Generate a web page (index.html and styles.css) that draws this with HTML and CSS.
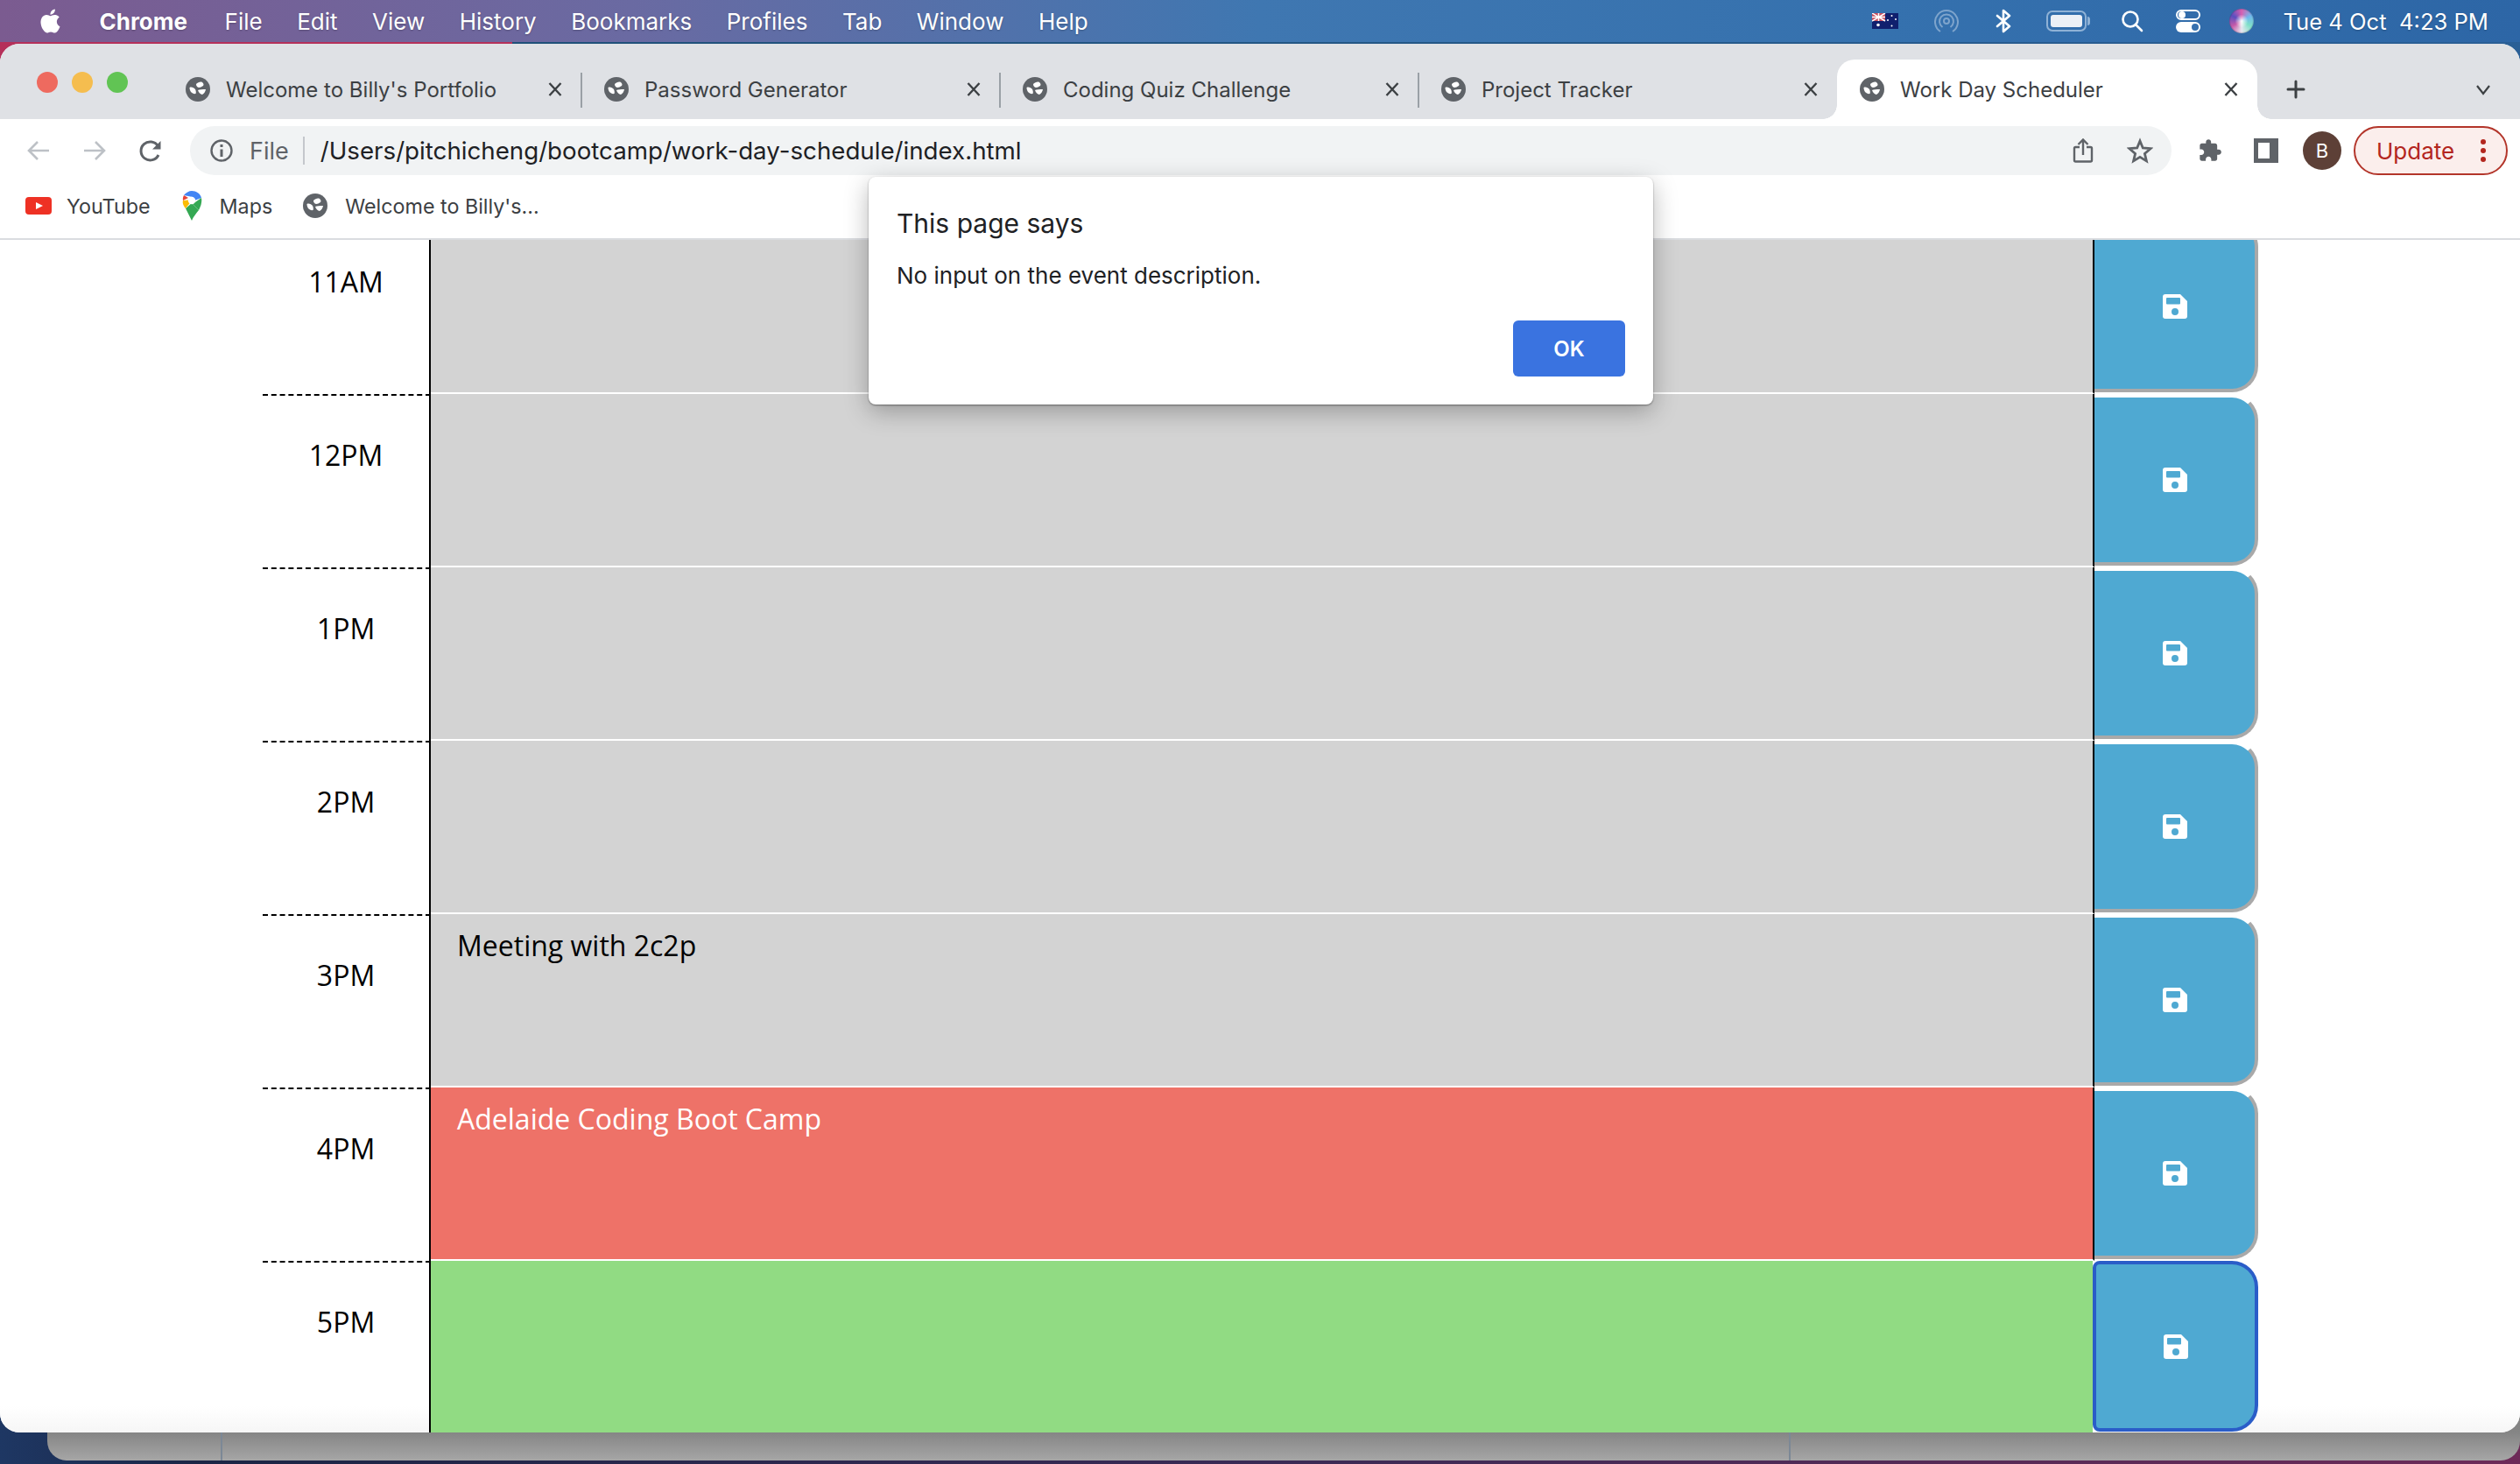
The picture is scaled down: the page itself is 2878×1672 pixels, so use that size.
FILE: index.html
```html
<!DOCTYPE html>
<html lang="en">
<head>
  <meta charset="UTF-8">
  <title>Work Day Scheduler</title>
  <link rel="stylesheet" href="styles.css">
</head>
<body>
  <svg class="defs" width="0" height="0">
    <symbol id="globe" viewBox="0 0 28 28">
      <circle cx="14" cy="14" r="14" fill="#5f6368"/>
      <path fill="#fff" d="M12 8c2-2 5-3 7-2 1.500 1 2 3 1 4-2 1-3 2-5 2-2-.5-3-2-3-4Z"/>
      <path fill="#fff" d="M4.500 12c2-1 5 0 6.500 2 1 2 1 4 .5 5-2 .5-4-.5-5.500-2-1-1.500-1.500-3.500-1.500-5Z"/>
      <path fill="#fff" d="M14 15c2-1 5-1 9-1-.5 3-2 5-4 6-2-.5-4-2-5-5Z"/>
    </symbol>
    <symbol id="close" viewBox="0 0 18 18">
      <path fill="none" stroke="#3c4043" stroke-width="2.400" d="M2.500 2l13 14m0-14l-13 14"/>
    </symbol>
    <symbol id="save" viewBox="0 0 28 28">
      <path fill="#fff" fill-rule="evenodd" d="M3 0H20L28 8V25a3 3 0 0 1-3 3H3a3 3 0 0 1-3-3V3a3 3 0 0 1 3-3ZM5 4a1 1 0 0 0-1 1V10.500a1 1 0 0 0 1 1H19a1 1 0 0 0 1-1V5a1 1 0 0 0-1-1ZM14 16a4 4 0 1 0 0 8 4 4 0 0 0 0-8Z"/>
    </symbol>
  </svg>

  <div class="back-strip"></div>
  <div class="back-window"><span class="back-line"></span><span class="back-line line-2"></span></div>

  <header class="menubar">
    <nav class="menu-left">
      <svg class="apple" viewBox="0 0 24 24"><path fill="#fff" d="M12.152 6.896c-.948 0-2.415-1.078-3.960-1.040-2.040.027-3.910 1.183-4.961 3.014-2.117 3.675-.546 9.103 1.519 12.090 1.013 1.454 2.208 3.090 3.792 3.039 1.520-.065 2.090-.987 3.935-.987 1.831 0 2.350.987 3.960.948 1.637-.026 2.676-1.480 3.676-2.948 1.156-1.688 1.636-3.325 1.662-3.415-.039-.013-3.182-1.221-3.220-4.857-.026-3.040 2.480-4.494 2.597-4.559-1.429-2.090-3.623-2.324-4.390-2.376-2-.156-3.675 1.090-4.610 1.090zM15.530 3.830c.843-1.012 1.400-2.427 1.245-3.830-1.207.052-2.662.805-3.532 1.818-.780.896-1.454 2.338-1.273 3.714 1.338.104 2.715-.688 3.559-1.701"/></svg>
      <span class="app-name">Chrome</span>
      <span>File</span>
      <span>Edit</span>
      <span>View</span>
      <span>History</span>
      <span>Bookmarks</span>
      <span>Profiles</span>
      <span>Tab</span>
      <span>Window</span>
      <span>Help</span>
    </nav>
    <div class="menu-right">
      <svg class="flag" viewBox="0 0 30 18">
        <rect width="30" height="18" fill="#10206e"/>
        <rect width="15" height="9" fill="#c8505f"/>
        <path stroke="#fff" stroke-width="1.500" d="M0 0l15 9M15 0L0 9M7.500 0v9M0 4.500h15"/>
        <g fill="#fff"><circle cx="7" cy="13.500" r="1.800"/><circle cx="22.500" cy="3" r="1"/><circle cx="22.500" cy="14.500" r="1"/><circle cx="18" cy="8" r="1"/><circle cx="27" cy="7" r="1"/></g>
      </svg>
      <svg class="airdrop" viewBox="0 0 28 28" fill="none" stroke="#7ea4cc" stroke-width="2">
        <path d="M7 26a13 13 0 1 1 14 0"/><path d="M9.500 21a8 8 0 1 1 9 0"/><circle cx="14" cy="14" r="3"/>
      </svg>
      <svg class="bluetooth" viewBox="0 0 18 28" fill="none" stroke="#fff" stroke-width="2.600" stroke-linejoin="round" stroke-linecap="round">
        <path d="M2 8l14 12-7 6V2l7 6L2 20"/>
      </svg>
      <div class="battery"><span class="battery-level"></span></div>
      <svg class="search" viewBox="0 0 26 26" fill="none" stroke="#fff" stroke-width="2.600" stroke-linecap="round">
        <circle cx="11" cy="11" r="8.500"/><path d="M17 17l7 7"/>
      </svg>
      <div class="switches">
        <span class="switch off"></span>
        <span class="switch on"></span>
      </div>
      <span class="siri"></span>
      <span class="clock">Tue 4 Oct&nbsp; 4:23 PM</span>
    </div>
  </header>

  <div class="window">
    <div class="tabstrip">
      <div class="traffic">
        <span class="dot red"></span>
        <span class="dot yellow"></span>
        <span class="dot green"></span>
      </div>
      <div class="tab sep">
        <svg class="favicon"><use href="#globe"/></svg>
        <span class="tab-title">Welcome to Billy's Portfolio</span>
        <svg class="tab-close"><use href="#close"/></svg>
      </div>
      <div class="tab sep">
        <svg class="favicon"><use href="#globe"/></svg>
        <span class="tab-title">Password Generator</span>
        <svg class="tab-close"><use href="#close"/></svg>
      </div>
      <div class="tab sep">
        <svg class="favicon"><use href="#globe"/></svg>
        <span class="tab-title">Coding Quiz Challenge</span>
        <svg class="tab-close"><use href="#close"/></svg>
      </div>
      <div class="tab">
        <svg class="favicon"><use href="#globe"/></svg>
        <span class="tab-title">Project Tracker</span>
        <svg class="tab-close"><use href="#close"/></svg>
      </div>
      <div class="tab active">
        <svg class="favicon"><use href="#globe"/></svg>
        <span class="tab-title">Work Day Scheduler</span>
        <svg class="tab-close"><use href="#close"/></svg>
      </div>
      <svg class="new-tab" viewBox="0 0 24 24"><path stroke="#3c4043" stroke-width="3" stroke-linecap="round" d="M12 3v18M3 12h18"/></svg>
      <svg class="tab-list" viewBox="0 0 20 20" fill="none"><path stroke="#3c4043" stroke-width="2.200" d="M3 6l7 9 7-9"/></svg>
    </div>

    <div class="toolbar">
      <span class="nav-btn"><svg viewBox="0 0 28 28" fill="none" stroke="#bdc1c6" stroke-width="2.600"><path d="M26 14H3M13 4L3 14l10 10"/></svg></span>
      <span class="nav-btn"><svg viewBox="0 0 28 28" fill="none" stroke="#bdc1c6" stroke-width="2.600"><path d="M2 14h23M15 4l10 10-10 10"/></svg></span>
      <span class="nav-btn"><svg viewBox="0 0 28 28"><path fill="none" stroke="#5f6368" stroke-width="3" d="M23 19a10.500 10.500 0 1 1-.5-10"/><path fill="#5f6368" d="M25.500 3v9.500H16Z"/></svg></span>
      <div class="omnibox">
        <svg class="info" viewBox="0 0 28 28" fill="none" stroke="#5f6368" stroke-width="2.400"><circle cx="14" cy="14" r="11.500"/><path stroke-width="3" d="M14 12.500V21M14 7v3"/></svg>
        <span class="scheme">File</span>
        <span class="omni-sep"></span>
        <span class="url">/Users/pitchicheng/bootcamp/work-day-schedule/index.html</span>
        <svg class="share" viewBox="0 0 24 30" fill="none" stroke="#5f6368" stroke-width="2.400"><path d="M8 11H3.500a1.500 1.500 0 0 0-1.500 1.500V26a1.500 1.500 0 0 0 1.500 1.500h17A1.500 1.500 0 0 0 22 26V12.500a1.500 1.500 0 0 0-1.500-1.500H16"/><path d="M12 20V3M6.500 8L12 2.500 17.500 8"/></svg>
        <svg class="star" viewBox="0 0 30 30" fill="none" stroke="#5f6368" stroke-width="2.800" stroke-linejoin="miter"><path d="M15 4l3.300 8 8.700.7-6.600 5.700 2 8.500-7.400-4.500-7.400 4.500 2-8.500L3 12.700l8.700-.7Z"/></svg>
      </div>
      <span class="nav-btn first-action"><svg viewBox="0 0 24 24"><path fill="#5f6368" d="M20.500 11H19V7c0-1.100-.9-2-2-2h-4V3.500C13 2.120 11.880 1 10.500 1S8 2.120 8 3.500V5H4c-1.100 0-1.990.9-1.990 2v3.800H3.500c1.490 0 2.700 1.210 2.700 2.700s-1.210 2.700-2.700 2.700H2V20c0 1.100.9 2 2 2h3.800v-1.500c0-1.490 1.210-2.700 2.700-2.700 1.490 0 2.700 1.210 2.700 2.700V22H17c1.100 0 2-.9 2-2v-4h1.500c1.380 0 2.500-1.120 2.500-2.500S21.880 11 20.500 11z"/></svg></span>
      <span class="nav-btn"><span class="side-panel"></span></span>
      <span class="nav-btn"><span class="avatar">B</span></span>
      <div class="update">
        <span>Update</span>
        <span class="update-dots"><i></i><i></i><i></i></span>
      </div>
    </div>

    <div class="bookmarks">
      <div class="bookmark">
        <svg class="yt" viewBox="0 0 30 20"><rect width="30" height="20" rx="4" fill="#ee3124"/><path fill="#fff" d="M12 6l8 4-8 4Z"/></svg>
        <span>YouTube</span>
      </div>
      <div class="bookmark wide">
        <svg class="pin" viewBox="0 0 24 34">
          <path fill="#34a853" d="M5 20l7 14c2-5 5-8 8-12L12 14Z"/>
          <path fill="#fbbc04" d="M2 11c-1 3 1 7 3 9l8-10Z"/>
          <path fill="#ea4335" d="M3 5C2 7 1.500 9 2 11l6-3Z"/>
          <path fill="#4285f4" d="M3 5c2-3 6-5 9-5 5 0 10 3 11 8l-8 3-2-4Z"/>
          <path fill="#34a853" d="M23 8c1 5-1 10-3 14l-7-7Z"/>
          <circle cx="12" cy="11" r="4.200" fill="#fff"/>
        </svg>
        <span>Maps</span>
      </div>
      <div class="bookmark wide">
        <svg class="favicon"><use href="#globe"/></svg>
        <span>Welcome to Billy's...</span>
      </div>
    </div>

    <main class="page">
      <div class="schedule">
        <div class="row">
          <div class="hour">11AM</div>
          <div class="description past"></div>
          <div class="save-btn"><svg class="save-icon"><use href="#save"/></svg></div>
        </div>
        <div class="row">
          <div class="hour">12PM</div>
          <div class="description past"></div>
          <div class="save-btn"><svg class="save-icon"><use href="#save"/></svg></div>
        </div>
        <div class="row">
          <div class="hour">1PM</div>
          <div class="description past"></div>
          <div class="save-btn"><svg class="save-icon"><use href="#save"/></svg></div>
        </div>
        <div class="row">
          <div class="hour">2PM</div>
          <div class="description past"></div>
          <div class="save-btn"><svg class="save-icon"><use href="#save"/></svg></div>
        </div>
        <div class="row">
          <div class="hour">3PM</div>
          <div class="description past">Meeting with 2c2p</div>
          <div class="save-btn"><svg class="save-icon"><use href="#save"/></svg></div>
        </div>
        <div class="row">
          <div class="hour">4PM</div>
          <div class="description present">Adelaide Coding Boot Camp</div>
          <div class="save-btn"><svg class="save-icon"><use href="#save"/></svg></div>
        </div>
        <div class="row">
          <div class="hour">5PM</div>
          <div class="description future"></div>
          <div class="save-btn focused"><svg class="save-icon"><use href="#save"/></svg></div>
        </div>
      </div>
    </main>
  </div>

  <div class="alert">
    <div class="alert-title">This page says</div>
    <div class="alert-msg">No input on the event description.</div>
    <div class="alert-actions"><button class="alert-ok">OK</button></div>
  </div>
</body>
</html>
```

FILE: styles.css
```css
* {
  box-sizing: border-box;
}
html, body {
  margin: 0;
  height: 100%;
}
body {
  position: relative;
  width: 2878px;
  height: 1672px;
  overflow: hidden;
  font-family: "Inter", "Liberation Sans", sans-serif;
  background: linear-gradient(90deg, #1e3763 0, #1b2545 8%, #3a2a55 50%, #6d2a58 100%);
}
.defs {
  position: absolute;
}

/* desktop behind the browser */
.back-strip {
  position: absolute;
  top: 48px;
  left: 0;
  width: 100%;
  height: 40px;
  background: linear-gradient(90deg, #b5305a 0, #b5305a 585px, #1f5078 585px, #2a5f96 100%);
}
.back-window {
  position: absolute;
  left: 54px;
  right: 0;
  top: 1560px;
  height: 108px;
  border-radius: 0 0 22px 22px;
  background: linear-gradient(180deg, #7d7d7d 0, #858585 76px, #a6a6a6 108px);
}
.back-line {
  position: absolute;
  left: 198px;
  top: 0;
  bottom: 0;
  width: 2px;
  background: #7c8896;
}
.line-2 {
  left: 1989px;
}

/* mac menu bar */
.menubar {
  position: relative;
  height: 48px;
  display: flex;
  justify-content: space-between;
  align-items: center;
  color: #fff;
  font-size: 26px;
  text-shadow: 0 1px 2px rgba(0,0,0,0.25);
  background: linear-gradient(90deg, #7b5b90 0, #6a6aa2 25%, #3f77b1 50%, #3571ae 75%, #2d66a6 100%);
}
.menu-left {
  display: flex;
  align-items: center;
  gap: 39.500px;
  padding-left: 44px;
}
.apple {
  width: 27px;
  height: 32px;
  margin-right: 3px;
}
.app-name {
  margin-right: 3px;
  font-weight: 700;
}
.menu-right {
  display: flex;
  align-items: center;
  padding-right: 36px;
}
.flag {
  width: 30px;
  height: 18px;
}
.airdrop {
  width: 28px;
  height: 28px;
  margin-left: 41px;
}
.bluetooth {
  width: 18px;
  height: 28px;
  margin-left: 42px;
}
.battery {
  position: relative;
  width: 46px;
  height: 24px;
  margin-left: 40px;
  margin-right: 4px;
  padding: 3px;
  border: 2px solid #8fb2d6;
  border-radius: 7px;
}
.battery::after {
  content: "";
  position: absolute;
  right: -6px;
  top: 5px;
  width: 3px;
  height: 10px;
  border-radius: 0 3px 3px 0;
  background: #8fb2d6;
}
.battery-level {
  display: block;
  height: 100%;
  border-radius: 3px;
  background: #ecf0f6;
}
.search {
  width: 26px;
  height: 26px;
  margin-left: 35px;
}
.switches {
  display: flex;
  flex-direction: column;
  gap: 2px;
  margin-left: 37px;
}
.switch {
  display: block;
  position: relative;
  width: 28px;
  height: 12px;
  border-radius: 6px;
}
.switch::after {
  content: "";
  position: absolute;
  top: 2px;
  width: 8px;
  height: 8px;
  border-radius: 50%;
}
.switch.off {
  border: 2px solid #fff;
}
.switch.off::after {
  top: 0;
  left: 1px;
  background: #fff;
}
.switch.on {
  background: #fff;
}
.switch.on::after {
  right: 2px;
  background: #3670ae;
}
.siri {
  width: 28px;
  height: 28px;
  margin-left: 33px;
  border-radius: 50%;
  background:
    radial-gradient(circle, #fff 0, rgba(255,255,255,0.6) 14%, rgba(255,255,255,0) 38%, rgba(40,36,70,0) 62%, #2a2a4a 92%),
    conic-gradient(#d85fb0, #6fb8ee, #7fe0c8, #e8e8f0, #c65aa8, #5a4fc0, #d85fb0);
}
.clock {
  margin-left: 33px;
  font-size: 25.600px;
}

/* browser window */
.window {
  position: relative;
  margin-top: 2px;
  height: 1586px;
  display: flex;
  flex-direction: column;
  overflow: hidden;
  border-radius: 22px;
  background: #fff;
}
.tabstrip {
  height: 86px;
  flex: none;
  display: flex;
  align-items: flex-end;
  background: #dfe1e5;
}
.traffic {
  width: 186px;
  height: 68px;
  display: flex;
  align-items: center;
  gap: 16px;
  padding: 0 0 16px 42px;
}
.dot {
  width: 24px;
  height: 24px;
  border-radius: 50%;
}
.red {
  background: #ee6a5f;
}
.yellow {
  background: #f5bd4f;
}
.green {
  background: #61c454;
}
.tab {
  position: relative;
  width: 478px;
  height: 68px;
  display: flex;
  align-items: center;
  padding: 0 21px 0 26px;
  color: #3c4043;
  font-size: 24px;
}
.tab.sep::after {
  content: "";
  position: absolute;
  right: -1px;
  top: 15px;
  width: 2px;
  height: 40px;
  background: #9aa0a6;
}
.tab.active {
  width: 480px;
  padding-left: 26px;
  background: #fff;
  border-radius: 20px 20px 0 0;
}
.tab.active::before,
.tab.active::after {
  content: "";
  position: absolute;
  bottom: 0;
  width: 16px;
  height: 16px;
}
.tab.active::before {
  left: -16px;
  background: radial-gradient(circle at 0 0, #dfe1e5 15.500px, #fff 16px);
}
.tab.active::after {
  right: -16px;
  background: radial-gradient(circle at 100% 0, #dfe1e5 15.500px, #fff 16px);
}
.favicon {
  width: 28px;
  height: 28px;
  flex: none;
}
.tab-title {
  flex: 1;
  margin-left: 18px;
  white-space: nowrap;
}
.tab-close {
  width: 18px;
  height: 18px;
  flex: none;
}
.new-tab {
  width: 24px;
  height: 24px;
  margin: 0 0 22px 32px;
}
.tab-list {
  width: 20px;
  height: 20px;
  margin: 0 0 24px 192px;
}

.toolbar {
  height: 64px;
  flex: none;
  display: flex;
  align-items: center;
  padding: 8px 0 0 12px;
  background: #fff;
}
.nav-btn {
  width: 64px;
  height: 56px;
  flex: none;
  display: flex;
  align-items: center;
  justify-content: center;
}
.nav-btn svg {
  width: 28px;
  height: 28px;
}
.omnibox {
  width: 2263px;
  height: 56px;
  margin-left: 13px;
  display: flex;
  align-items: center;
  padding: 0 21px 0 22px;
  border-radius: 28px;
  background: #f1f3f4;
  font-size: 27px;
}
.info {
  width: 28px;
  height: 28px;
  flex: none;
}
.scheme {
  margin-left: 18px;
  color: #5f6368;
}
.omni-sep {
  width: 2px;
  height: 32px;
  margin: 0 18px 0 16px;
  background: #c4c7cc;
}
.url {
  flex: 1;
  font-size: 27.700px;
  color: #202124;
}
.share {
  width: 24px;
  height: 30px;
  margin-right: 38px;
}
.star {
  width: 30px;
  height: 30px;
}
.first-action {
  margin-left: 12px;
}
.side-panel {
  width: 28px;
  height: 28px;
  border: 5px solid #5f6368;
  border-right-width: 10px;
}
.avatar {
  width: 44px;
  height: 44px;
  display: flex;
  align-items: center;
  justify-content: center;
  border-radius: 50%;
  background: #5d4037;
  color: #fff;
  font-size: 22px;
}
.update {
  width: 176px;
  height: 56px;
  margin-left: 4px;
  display: flex;
  align-items: center;
  justify-content: space-between;
  padding: 0 23px 0 24px;
  border: 2px solid #b3352a;
  border-radius: 28px;
  background: #fbeeec;
  color: #b3261e;
  font-size: 26px;
}
.update-dots {
  display: flex;
  flex-direction: column;
  gap: 4px;
}
.update-dots i {
  display: block;
  width: 6px;
  height: 6px;
  border-radius: 50%;
  background: #b3261e;
}

.bookmarks {
  height: 74px;
  flex: none;
  display: flex;
  align-items: center;
  gap: 35px;
  padding: 0 0 2px 29px;
  border-bottom: 2px solid #dadce0;
  background: #fff;
  color: #3c4043;
  font-size: 23.300px;
}
.bookmark {
  display: flex;
  align-items: center;
  gap: 17px;
}
.bookmark.wide {
  gap: 20px;
}
.yt {
  width: 30px;
  height: 20px;
}
.pin {
  width: 24px;
  height: 34px;
}

/* scheduler page */
.page {
  flex: 1;
  overflow: hidden;
  background: linear-gradient(180deg, #fff 0, #fff calc(100% - 30px), #f6f6f6 100%);
  font-family: "Open Sans", sans-serif;
  font-size: 32px;
}
.schedule {
  width: 2279px;
  margin: -22px 0 0 300px;
}
.row {
  height: 198px;
  display: grid;
  grid-template-columns: 192px 1900px 187px;
}
.hour {
  padding-top: 44px;
  line-height: 48px;
  text-align: center;
  color: #000;
  border-top: 2px dashed #000;
  border-right: 2px solid #000;
}
.description {
  padding: 12px 30px;
  line-height: 48px;
  color: #000;
  border-right: 2px solid #000;
  border-bottom: 2px solid #fff;
}
.past {
  background: #d3d3d3;
}
.present {
  background: #ee7268;
  color: #fff;
}
.future {
  background: #91db83;
  border-right-color: #fff;
}
.save-btn {
  height: 196px;
  display: flex;
  align-items: center;
  justify-content: center;
  border-top: 4px solid #fff;
  border-right: 4px solid #a9a9a9;
  border-bottom: 4px solid #a9a9a9;
  border-radius: 0 30px 30px 0;
  background: #4fa9d2;
}
.save-btn.focused {
  height: 195px;
  margin-left: -2px;
  border: 4px solid #2a5dc8;
  border-radius: 8px 30px 30px 8px;
}
.save-icon {
  width: 28px;
  height: 28px;
}

/* alert dialog */
.alert {
  position: absolute;
  left: 992px;
  top: 202px;
  width: 896px;
  height: 260px;
  padding: 35px 32px 32px;
  border-radius: 8px;
  background: #fff;
  box-shadow: 0 1px 2px rgba(0,0,0,0.4), 0 8px 28px rgba(0,0,0,0.28);
  color: #202124;
}
.alert-title {
  font-size: 30px;
  line-height: 36px;
}
.alert-msg {
  margin-top: 24px;
  font-size: 26px;
  line-height: 36px;
}
.alert-actions {
  display: flex;
  justify-content: flex-end;
  margin-top: 33px;
}
.alert-ok {
  width: 128px;
  height: 64px;
  border: none;
  border-radius: 6px;
  background: #3a73e0;
  color: #fff;
  font-family: "Inter", sans-serif;
  font-size: 24px;
  font-weight: 600;
}
```
